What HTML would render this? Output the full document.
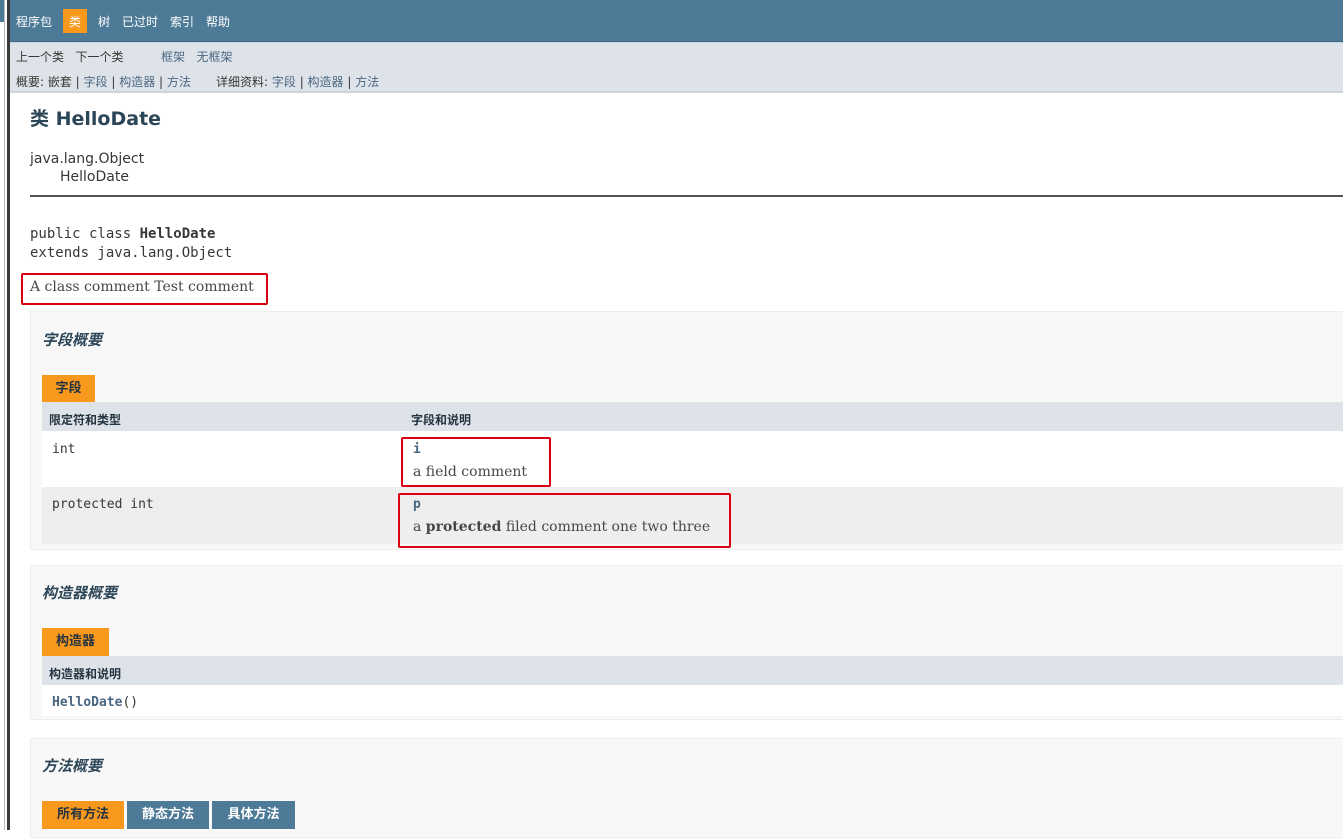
<!DOCTYPE html>
<html><head><meta charset="utf-8"><style>
*{margin:0;padding:0;box-sizing:border-box}
body{width:1343px;height:830px;overflow:hidden;background:#fff;position:relative;font-family:"DejaVu Sans","Liberation Sans","Noto Sans CJK SC",sans-serif;color:#353833}
.a{position:absolute;white-space:nowrap}
.s{font-size:12px}
.lnk{color:#4A6782}
.mono{font-family:"DejaVu Sans Mono","Liberation Mono","Noto Sans CJK SC",monospace}
.serif{font-family:"DejaVu Serif","Liberation Serif","Noto Serif CJK SC",serif}
.sec{position:absolute;left:30px;right:-2px;background:#f8f8f8;border:1px solid #ededed}
.h{position:absolute;left:42px;font-size:15px;font-weight:bold;font-style:italic;color:#2c4557}
.tab{position:absolute;height:28px;font-size:13px;font-weight:bold;line-height:28px;text-align:center}
.or{background:#F8981D;color:#253441}
.bl{background:#4D7A97;color:#fff}
.thr{position:absolute;left:42px;right:0;background:#dee3e9;font-size:12px;font-weight:bold;color:#253441}
.red{position:absolute;border:2px solid #d9000f;border-radius:2px}
</style></head><body>
<div class="a" style="left:0;top:0;width:5px;height:22px;background:#4D7A97"></div>
<div class="a" style="left:4px;top:0;width:1px;height:830px;background:#bbb"></div>
<div class="a" style="left:7px;top:0;width:3px;height:830px;background:#3a3a3a"></div>
<div class="a" style="left:10px;top:0;right:0;height:42px;background:#4D7A97;border-bottom:1px solid #3e6680"></div>
<div class="a" style="left:10px;top:42px;right:0;height:51px;background:#dee3e9;border-top:1px solid #c8d9e6;border-bottom:2px solid #d0d4da"></div>
<div class="a s" style="left:16px;top:13px;color:#fff">程序包</div>
<div class="a" style="left:63px;top:9px;width:24px;height:24px;background:#F8981D"></div>
<div class="a s" style="left:69px;top:13px;color:#fff">类</div>
<div class="a s" style="left:98px;top:13px;color:#fff">树</div>
<div class="a s" style="left:122px;top:13px;color:#fff">已过时</div>
<div class="a s" style="left:170px;top:13px;color:#fff">索引</div>
<div class="a s" style="left:206px;top:13px;color:#fff">帮助</div>
<div class="a s" style="left:16px;top:48px">上一个类&nbsp;&nbsp;&nbsp;下一个类</div>
<div class="a s lnk" style="left:161px;top:48px">框架&nbsp;&nbsp;&nbsp;无框架</div>
<div class="a s" style="left:16px;top:73px">概要: 嵌套 | <span class="lnk">字段</span> | <span class="lnk">构造器</span> | <span class="lnk">方法</span></div>
<div class="a s" style="left:216px;top:73px">详细资料: <span class="lnk">字段</span> | <span class="lnk">构造器</span> | <span class="lnk">方法</span></div>
<div class="a" style="left:30px;top:104px;font-size:19px;font-weight:bold;color:#2c4557">类 HelloDate</div>
<div class="a" style="left:30px;top:151px;font-size:14px">java.lang.Object</div>
<div class="a" style="left:60px;top:169px;font-size:14px">HelloDate</div>
<div class="a" style="left:30px;top:195px;right:0;height:2px;background:#555"></div>
<div class="a mono" style="left:30px;top:226px;font-size:14px">public class <b>HelloDate</b></div>
<div class="a mono" style="left:30px;top:245px;font-size:14px">extends java.lang.Object</div>
<div class="red" style="left:21px;top:273px;width:247px;height:32px"></div>
<div class="a serif" style="left:30px;top:279px;font-size:14px;color:#474747">A class comment Test comment</div>

<div class="sec" style="top:311px;height:239px"></div>
<div class="h" style="top:329px">字段概要</div>
<div class="tab or" style="left:42px;top:375px;width:53px">字段</div>
<div class="thr" style="top:402px;height:29px"><span class="a" style="left:7px;top:9px">限定符和类型</span><span class="a" style="left:369px;top:9px">字段和说明</span></div>
<div class="a" style="left:42px;top:431px;right:0;height:56px;background:#fff"></div>
<div class="a" style="left:42px;top:487px;right:0;height:57px;background:#eee"></div>
<div class="a mono" style="left:52px;top:442px;font-size:13px">int</div>
<div class="a mono" style="left:52px;top:497px;font-size:13px">protected int</div>
<div class="a mono lnk" style="left:413px;top:442px;font-size:13px;font-weight:bold">i</div>
<div class="a serif" style="left:413px;top:464px;font-size:14px;color:#474747">a field comment</div>
<div class="a mono lnk" style="left:413px;top:497px;font-size:13px;font-weight:bold">p</div>
<div class="a serif" style="left:413px;top:519px;font-size:14px;color:#474747">a <b>protected</b> filed comment one two three</div>
<div class="red" style="left:401px;top:437px;width:150px;height:50px"></div>
<div class="red" style="left:398px;top:493px;width:333px;height:55px"></div>

<div class="sec" style="top:565px;height:155px"></div>
<div class="h" style="top:582px">构造器概要</div>
<div class="tab or" style="left:42px;top:628px;width:67px">构造器</div>
<div class="thr" style="top:656px;height:29px"><span class="a" style="left:7px;top:9px">构造器和说明</span></div>
<div class="a" style="left:42px;top:685px;right:0;height:31px;background:#fff"></div>
<div class="a mono" style="left:52px;top:695px;font-size:13px"><b class="lnk">HelloDate</b>()</div>

<div class="sec" style="top:738px;height:100px"></div>
<div class="h" style="top:755px">方法概要</div>
<div class="tab or" style="left:42px;top:801px;width:82px">所有方法</div>
<div class="tab bl" style="left:127px;top:801px;width:82px">静态方法</div>
<div class="tab bl" style="left:212px;top:801px;width:83px">具体方法</div>
</body></html>
